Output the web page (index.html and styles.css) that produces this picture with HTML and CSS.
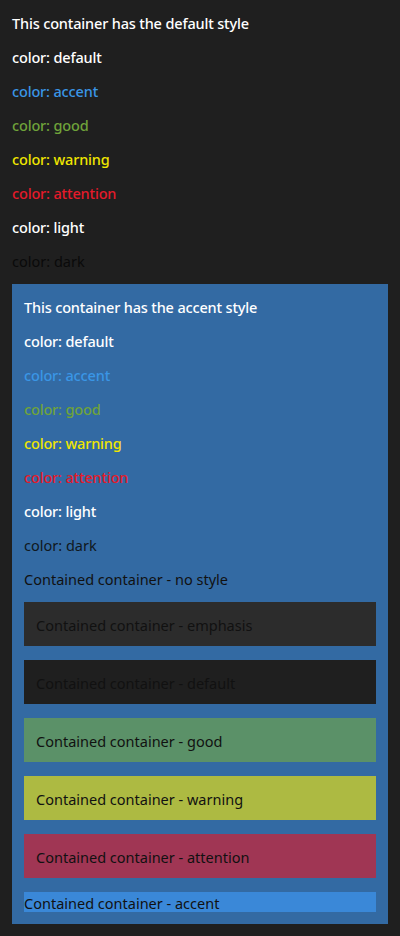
FILE: index.html
```html
<!DOCTYPE html>
<html>
<head>
<meta charset="utf-8">
<link rel="stylesheet" href="styles.css">
</head>
<body>
<div class="card">
  <div class="stack">
    <div class="line c-default">This container has the default style</div>
    <div class="line c-default">color: default</div>
    <div class="line c-accent">color: accent</div>
    <div class="line c-good">color: good</div>
    <div class="line c-warning">color: warning</div>
    <div class="line c-attention">color: attention</div>
    <div class="line c-light">color: light</div>
    <div class="line c-dark">color: dark</div>
    <div class="box box-accent-style stack">
      <div class="line c-default">This container has the accent style</div>
      <div class="line c-default">color: default</div>
      <div class="line c-accent">color: accent</div>
      <div class="line c-good">color: good</div>
      <div class="line c-warning">color: warning</div>
      <div class="line c-attention">color: attention</div>
      <div class="line c-light">color: light</div>
      <div class="line c-dark2">color: dark</div>
      <div class="line plain">Contained container - no style</div>
      <div class="inner emphasis"><div class="line plain">Contained container - emphasis</div></div>
      <div class="inner deflt"><div class="line plain">Contained container - default</div></div>
      <div class="inner good"><div class="line plain">Contained container - good</div></div>
      <div class="inner warning"><div class="line plain">Contained container - warning</div></div>
      <div class="inner attention"><div class="line plain">Contained container - attention</div></div>
      <div class="inner-flat accent"><div class="line plain">Contained container - accent</div></div>
    </div>
  </div>
</div>
</body>
</html>
```
FILE: styles.css
```css
html, body {
  margin: 0;
  padding: 0;
  background: #1f1f1f;
}
body {
  font-family: "Noto Sans", "Open Sans", sans-serif;
  font-size: 14.5px;
}
.card {
  padding: 12px;
  min-height: 936px;
  box-sizing: border-box;
}
.stack {
  display: flex;
  flex-direction: column;
  gap: 14px;
}
.line {
  box-sizing: border-box;
  height: 20px;
  line-height: 20px;
  padding-top: 1px;
  font-weight: 500;
  letter-spacing: -0.16px;
  white-space: nowrap;
}
.c-default { color: #ffffff; }
.c-accent { color: #3a96e6; }
.c-good { color: #6fa33a; }
.c-warning { color: #f0e600; }
.c-attention { color: #e51a2a; }
.c-light { color: #ffffff; }
.c-dark { color: #0a0a0a; font-weight: 400; letter-spacing: 0; }
.c-dark2 { color: #101820; font-weight: 400; letter-spacing: 0; }
.plain { color: #111111; font-weight: 400; letter-spacing: 0; }
.box-accent-style {
  background: #336aa3;
  padding: 12px;
}
.inner {
  padding: 12px;
}
.emphasis { background: #2c2c2c; }
.deflt { background: #1f1f1f; }
.good { background: #5b9168; }
.warning { background: #adba42; }
.attention { background: #a03654; }
.accent { background: #3a88d8; }
```
